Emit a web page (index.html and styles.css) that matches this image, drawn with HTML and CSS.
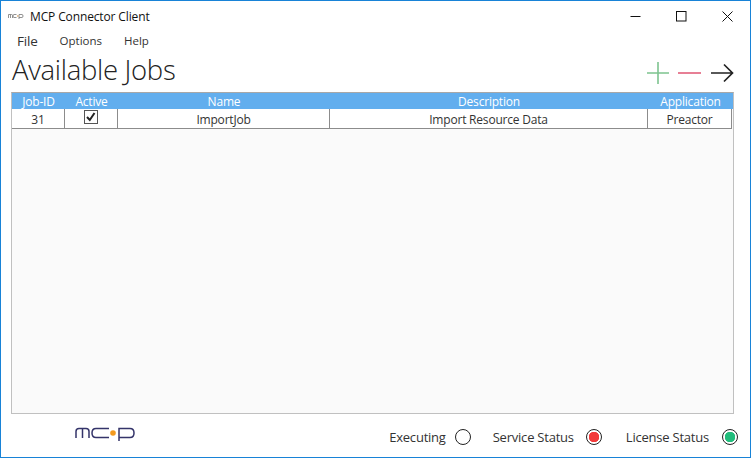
FILE: index.html
```html
<!DOCTYPE html>
<html lang="en">
<head>
<meta charset="utf-8">
<title>MCP Connector Client</title>
<link rel="stylesheet" href="styles.css">
</head>
<body>
<div class="window">
  <header class="titlebar">
    <svg class="app-logo" width="16" height="6" viewBox="0 0 16 6"><path d="M.5 5V1.5h3q1 0 1 1V5M2.500 1.500V5M6 1.500h2.500M6 4.500h2.500M6 1.500Q5 1.500 5 3T6 4.500M11 1.500h3q1 0 1 1.500T14 4.500h-3M11 1.500V6" fill="none" stroke="#777" stroke-width=".8"/><circle cx="9.700" cy="3" r=".8" fill="#d9a05b"/></svg>
    <span class="app-title">MCP Connector Client</span>
    <div class="controls">
      <svg width="11" height="11" viewBox="0 0 11 11"><path d="M.5 5.500h10" stroke="#111" fill="none"/></svg>
      <svg width="11" height="11" viewBox="0 0 11 11"><rect x=".5" y=".5" width="9.500" height="9.500" stroke="#111" fill="none"/></svg>
      <svg width="11" height="11" viewBox="0 0 11 11"><path d="M.5.500l10 10M10.500.500l-10 10" stroke="#111" fill="none"/></svg>
    </div>
  </header>
  <nav class="menubar">
    <span class="menu-file">File</span>
    <span class="menu-item">Options</span>
    <span class="menu-item">Help</span>
  </nav>
  <div class="heading-row">
    <h1 class="heading">Available Jobs</h1>
    <div class="actions">
      <svg width="24" height="24" viewBox="0 0 24 24"><path d="M1 12h22M12 1v22" stroke="#7dc48f" stroke-width="1.600" fill="none"/></svg>
      <svg width="24" height="24" viewBox="0 0 24 24"><path d="M0 12h23" stroke="#e5718a" stroke-width="1.800" fill="none"/></svg>
      <svg width="24" height="24" viewBox="0 0 24 24"><path d="M1 12h21M14 3.500l8.500 8.500-8.500 8.500" stroke="#222" stroke-width="1.700" fill="none"/></svg>
    </div>
  </div>
  <section class="grid">
    <div class="grid-head">
      <span class="c1">Job-ID</span>
      <span class="c2">Active</span>
      <span class="c3">Name</span>
      <span class="c4">Description</span>
      <span class="c5">Application</span>
    </div>
    <div class="grid-row">
      <span class="cell c1">31</span>
      <span class="cell c2"><span class="check"><svg width="12" height="12" viewBox="0 0 12 12"><path d="M2 6l2.800 3L9.500 2" fill="none" stroke="#222" stroke-width="2"/></svg></span></span>
      <span class="cell c3">ImportJob</span>
      <span class="cell c4">Import Resource Data</span>
      <span class="cell c5">Preactor</span>
    </div>
  </section>
  <footer class="footer">
    <svg class="logo" width="60" height="16" viewBox="0 0 60 16"><g fill="none" stroke="#34346a" stroke-width="1.500"><path d="M1 12V5.500Q1 2.500 4 2.500H11Q14 2.500 14 5.500V12M7.500 2.500V12"/><path d="M34 2.500H21Q17 2.500 17 7T21 11.500H34"/><path d="M44 15V2.500H55Q59 2.500 59 7T55 11.500H44"/></g><circle cx="38" cy="7" r="2.800" fill="#f39a1e"/></svg>
    <div class="statuses">
      <span class="status-label">Executing</span><span class="led led-idle"></span>
      <span class="status-label">Service Status</span><span class="led led-red"></span>
      <span class="status-label">License Status</span><span class="led led-green"></span>
    </div>
  </footer>
</div>
</body>
</html>
```
FILE: styles.css
```css
* { box-sizing: border-box; }
html, body { margin: 0; padding: 0; }
body { width: 751px; height: 458px; overflow: hidden; font-family: "Open Sans", "Noto Sans", sans-serif; color: #222; }
.window { width: 751px; height: 458px; background: #fff; border: 1px solid #1883d7; display: flex; flex-direction: column; }
.titlebar { height: 30px; flex: none; display: flex; align-items: center; padding: 0 17px 0 7px; }
.app-logo { flex: none; margin-right: 6px; }
.app-title { font-size: 12px; letter-spacing: -0.13px; color: #111; }
.controls { margin-left: auto; display: flex; gap: 35px; }
.menubar { height: 18px; flex: none; display: flex; align-items: center; padding-left: 16px; font-size: 11.500px; color: #333; }
.menu-file { font-size: 13.500px; margin-right: 22px; letter-spacing: -0.2px; padding-top: 1px; }
.menu-item { margin-right: 22px; }
.heading-row { height: 43px; flex: none; display: flex; align-items: center; justify-content: space-between; padding: 0 16px 0 11px; }
.heading { margin: 0 0 3px; font-size: 27.500px; font-weight: 300; letter-spacing: -0.3px; font-family: "Open Sans", sans-serif; color: #222; }
.actions { display: flex; gap: 8px; padding-top: 5px; }
.grid { margin-left: 10px; width: 723px; height: 322px; flex: none; background: #fafafa; border: 1px solid #c0c0c0; border-top-color: #a8a8a8; }
.grid-head, .grid-row { display: flex; font-size: 12px; letter-spacing: -0.2px; }
.grid-head { height: 16px; line-height: 17px; background: #62aeee; color: #fff; text-align: center; }
.grid-row { height: 20px; background: #fff; border-bottom: 1px solid #8c8c8c; border-right: 1px solid #8c8c8c; margin-right: 1px; color: #333; }
.c1, .c2 { width: 53px; flex: none; text-align: center; }
.c3 { width: 212px; flex: none; text-align: center; }
.c4 { width: 318px; flex: none; text-align: center; }
.c5 { flex: 1; text-align: center; }
.cell { display: flex; align-items: center; justify-content: center; padding-top: 1px; border-right: 1px solid #8c8c8c; }
.cell.c5 { border-right: 0; }
.cell.c2 { padding-top: 0; }
.check { width: 14px; height: 14px; margin-top: -3px; border: 1px solid #555; background: #fff; display: flex; }
.footer { flex: 1; display: flex; align-items: center; justify-content: space-between; padding: 3px 12px 0 74px; }
.logo { margin-top: -6px; }
.statuses { display: flex; align-items: center; font-size: 13px; letter-spacing: -0.22px; color: #333; }
.status-label { margin-left: 22px; }
.status-label:first-child { margin-left: 0; }
.led { width: 16px; height: 16px; margin-left: 12px; border-radius: 50%; border: 1px solid #222; background: #fff; }
.led-idle { margin-left: 9px; }
.led-green { margin-left: 13px; }
.led-red { margin-right: 2px; background: radial-gradient(circle, #f23a3a 0 5px, #fff 5.500px); }
.led-green { background: radial-gradient(circle, #22bd7c 0 5px, #fff 5.500px); }
```
